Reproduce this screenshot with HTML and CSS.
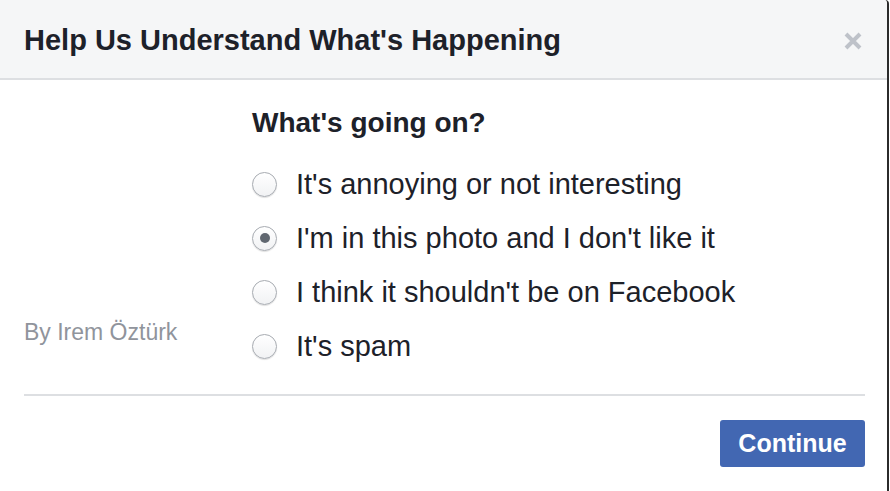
FILE: index.html
```html
<!DOCTYPE html>
<html>
<head>
<meta charset="utf-8">
<link rel="stylesheet" href="styles.css">
</head>
<body>
<div class="dialog">
  <div class="header">
    <h1 class="title">Help Us Understand What's Happening</h1>
    <svg class="close" width="20" height="20" viewBox="0 0 20 20"><path d="M3 3 L17 17 M17 3 L3 17" stroke="#bec2c9" stroke-width="4" stroke-linecap="butt"/></svg>
  </div>
  <div class="content">
    <div class="byline">By Irem Öztürk</div>
    <div class="question">
      <h2 class="heading">What's going on?</h2>
      <ul class="options">
        <li class="option"><span class="radio"></span><span>It's annoying or not interesting</span></li>
        <li class="option"><span class="radio checked"></span><span>I'm in this photo and I don't like it</span></li>
        <li class="option"><span class="radio"></span><span>I think it shouldn't be on Facebook</span></li>
        <li class="option"><span class="radio"></span><span>It's spam</span></li>
      </ul>
    </div>
  </div>
  <div class="footer">
    <button class="btn">Continue</button>
  </div>
</div>
</body>
</html>
```
FILE: styles.css
```css
html, body {
  margin: 0;
  padding: 0;
  background: #fff;
}
body {
  font-family: "Liberation Sans", Arial, sans-serif;
  color: #1d2129;
  width: 890px;
  height: 491px;
  overflow: hidden;
}
.dialog {
  width: 889px;
  height: 491px;
  border-right: 2px solid #2b2b2b;
  border-top-right-radius: 4px;
  box-sizing: border-box;
  background: #fff;
}
.header {
  height: 80px;
  box-sizing: border-box;
  background: #f5f6f7;
  border-bottom: 2px solid #dddfe2;
  display: flex;
  align-items: center;
  justify-content: space-between;
  padding: 0 24px 0 24px;
  border-top-right-radius: 4px;
}
.title {
  margin: 0;
  font-size: 29px;
  font-weight: bold;
  line-height: 34px;
  color: #1d2129;
  padding-top: 1px;
}
.close {
  display: block;
  margin-top: 3px;
}
.content {
  display: grid;
  grid-template-columns: 228px 1fr;
  height: 316px;
  box-sizing: border-box;
  border-bottom: 2px solid #dddfe2;
  margin: 0 22px 0 24px;
  padding: 0;
}
.byline {
  align-self: end;
  margin-bottom: 48px;
  color: #90949c;
  font-size: 23px;
  line-height: 28px;
}
.heading {
  margin: 28px 0 0;
  font-size: 28px;
  font-weight: bold;
  line-height: 30px;
}
.options {
  list-style: none;
  margin: 19px 0 0;
  padding: 0;
}
.option {
  display: flex;
  align-items: center;
  height: 54px;
  font-size: 29px;
}
.radio {
  width: 23px;
  height: 23px;
  border-radius: 50%;
  border: 1px solid #a7abb1;
  background: linear-gradient(#ffffff, #f1f2f4);
  box-shadow: 0 1px 1px rgba(0,0,0,0.12);
  margin-right: 19px;
  display: flex;
  align-items: center;
  justify-content: center;
  flex: none;
}
.radio.checked::after {
  content: "";
  width: 10px;
  height: 10px;
  border-radius: 50%;
  background: #606770;
}
.footer {
  display: flex;
  justify-content: flex-end;
  padding: 24px 22px 0 24px;
}
.btn {
  width: 145px;
  height: 47px;
  border: none;
  border-radius: 3px;
  background: #4267b2;
  color: #fff;
  font-family: "Liberation Sans", Arial, sans-serif;
  font-weight: bold;
  font-size: 25px;
  padding: 0;
}
```
